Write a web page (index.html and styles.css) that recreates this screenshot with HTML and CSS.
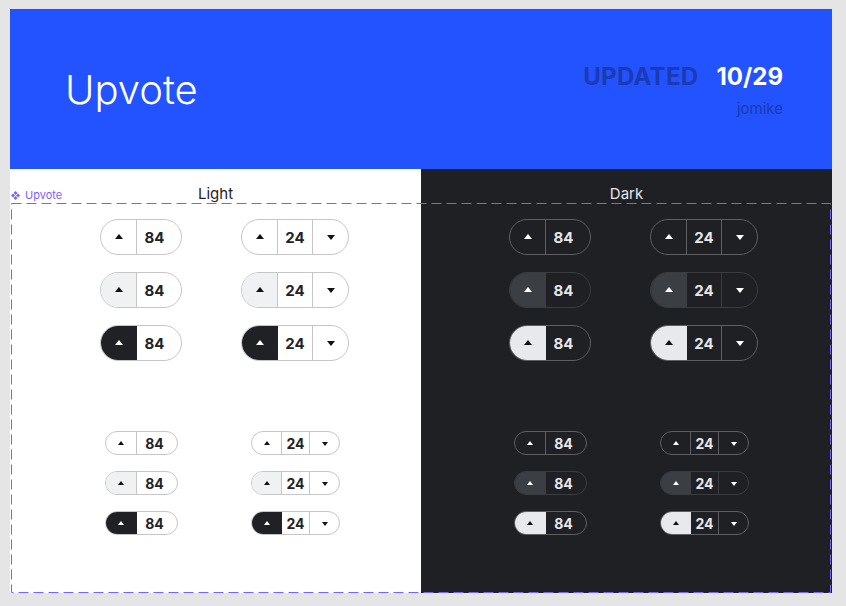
FILE: index.html
```
<!DOCTYPE html>
<html lang="en">
<head>
<meta charset="utf-8">
<title>Upvote</title>
<link rel="stylesheet" href="styles.css">
</head>
<body>
<div class="frame">
  <header class="hero">
    <h1 class="hero-title">Upvote</h1>
    <div class="hero-meta">
      <div class="updated"><span class="updated-label">UPDATED</span><span class="updated-date">10/29</span></div>
      <div class="author">jomike</div>
    </div>
  </header>
  <main class="panels">
    <section class="panel panel-light">
      <h2 class="panel-title">Light</h2>
      <div class="group group-lg">
        <div class="vote vote-lg"><span class="seg up"><i class="tri tri-up"></i></span><span class="seg count">84</span></div>
        <div class="vote vote-lg vote-2"><span class="seg up"><i class="tri tri-up"></i></span><span class="seg count">24</span><span class="seg down"><i class="tri tri-down"></i></span></div>
        <div class="vote vote-lg is-hover"><span class="seg up"><i class="tri tri-up"></i></span><span class="seg count">84</span></div>
        <div class="vote vote-lg vote-2 is-hover"><span class="seg up"><i class="tri tri-up"></i></span><span class="seg count">24</span><span class="seg down"><i class="tri tri-down"></i></span></div>
        <div class="vote vote-lg is-active"><span class="seg up"><i class="tri tri-up"></i></span><span class="seg count">84</span></div>
        <div class="vote vote-lg vote-2 is-active"><span class="seg up"><i class="tri tri-up"></i></span><span class="seg count">24</span><span class="seg down"><i class="tri tri-down"></i></span></div>
      </div>
      <div class="group group-sm">
        <div class="vote vote-sm"><span class="seg up"><i class="tri tri-up"></i></span><span class="seg count">84</span></div>
        <div class="vote vote-sm vote-2"><span class="seg up"><i class="tri tri-up"></i></span><span class="seg count">24</span><span class="seg down"><i class="tri tri-down"></i></span></div>
        <div class="vote vote-sm is-hover"><span class="seg up"><i class="tri tri-up"></i></span><span class="seg count">84</span></div>
        <div class="vote vote-sm vote-2 is-hover"><span class="seg up"><i class="tri tri-up"></i></span><span class="seg count">24</span><span class="seg down"><i class="tri tri-down"></i></span></div>
        <div class="vote vote-sm is-active"><span class="seg up"><i class="tri tri-up"></i></span><span class="seg count">84</span></div>
        <div class="vote vote-sm vote-2 is-active"><span class="seg up"><i class="tri tri-up"></i></span><span class="seg count">24</span><span class="seg down"><i class="tri tri-down"></i></span></div>
      </div>
    </section>
    <section class="panel panel-dark">
      <h2 class="panel-title">Dark</h2>
      <div class="group group-lg">
        <div class="vote vote-lg"><span class="seg up"><i class="tri tri-up"></i></span><span class="seg count">84</span></div>
        <div class="vote vote-lg vote-2"><span class="seg up"><i class="tri tri-up"></i></span><span class="seg count">24</span><span class="seg down"><i class="tri tri-down"></i></span></div>
        <div class="vote vote-lg is-hover"><span class="seg up"><i class="tri tri-up"></i></span><span class="seg count">84</span></div>
        <div class="vote vote-lg vote-2 is-hover"><span class="seg up"><i class="tri tri-up"></i></span><span class="seg count">24</span><span class="seg down"><i class="tri tri-down"></i></span></div>
        <div class="vote vote-lg is-active"><span class="seg up"><i class="tri tri-up"></i></span><span class="seg count">84</span></div>
        <div class="vote vote-lg vote-2 is-active"><span class="seg up"><i class="tri tri-up"></i></span><span class="seg count">24</span><span class="seg down"><i class="tri tri-down"></i></span></div>
      </div>
      <div class="group group-sm">
        <div class="vote vote-sm"><span class="seg up"><i class="tri tri-up"></i></span><span class="seg count">84</span></div>
        <div class="vote vote-sm vote-2"><span class="seg up"><i class="tri tri-up"></i></span><span class="seg count">24</span><span class="seg down"><i class="tri tri-down"></i></span></div>
        <div class="vote vote-sm is-hover"><span class="seg up"><i class="tri tri-up"></i></span><span class="seg count">84</span></div>
        <div class="vote vote-sm vote-2 is-hover"><span class="seg up"><i class="tri tri-up"></i></span><span class="seg count">24</span><span class="seg down"><i class="tri tri-down"></i></span></div>
        <div class="vote vote-sm is-active"><span class="seg up"><i class="tri tri-up"></i></span><span class="seg count">84</span></div>
        <div class="vote vote-sm vote-2 is-active"><span class="seg up"><i class="tri tri-up"></i></span><span class="seg count">24</span><span class="seg down"><i class="tri tri-down"></i></span></div>
      </div>
    </section>
    <svg class="outline" aria-hidden="true"><rect class="outline-rect" x="0.5" y="0.5"/></svg>
    <div class="outline-label">
      <svg class="outline-icon" width="9" height="9" viewBox="0 0 10 10"><path d="M5 0L7.2 2.2L5 4.4L2.8 2.2Z M5 5.6L7.2 7.8L5 10L2.8 7.8Z M2.2 2.8L4.4 5L2.2 7.2L0 5Z M7.8 2.8L10 5L7.8 7.2L5.6 5Z" fill="currentColor"/></svg>
      <span>Upvote</span>
    </div>
  </main>
</div>
</body>
</html>
```

FILE: styles.css
```
* { box-sizing: border-box; }
html, body { margin: 0; padding: 0; }
body {
  background: #e5e5e5;
  font-family: Inter, "Noto Sans", sans-serif;
  padding: 9px 0 0 10px;
}
.frame {
  width: 822px;
}
.hero {
  height: 160px;
  background: #2352ff;
  display: flex;
  justify-content: space-between;
  align-items: flex-start;
  padding: 0 49px 0 55px;
}
.hero-title {
  margin: 57px 0 0;
  font-size: 40px;
  line-height: 48px;
  font-weight: 300;
  color: #ffffff;
  letter-spacing: 0;
}
.hero-meta {
  margin-top: 54px;
  display: flex;
  flex-direction: column;
  align-items: flex-end;
}
.updated {
  display: flex;
  gap: 18px;
  font-size: 24px;
  line-height: 28px;
  font-weight: 700;
}
.updated-label { color: #1a3bb3; letter-spacing: 0.3px; }
.updated-date { color: #ffffff; }
.author {
  margin-top: 9px;
  font-size: 15px;
  line-height: 18px;
  color: #1a3aad;
}
.panels {
  position: relative;
  display: grid;
  grid-template-columns: 411px 411px;
  height: 424px;
}
.panel {
  display: flex;
  flex-direction: column;
  align-items: flex-start;
}
.panel-light { background: #ffffff; color: #222326; }
.panel-dark { background: #1f2024; color: #e6e6e9; }
.panel-title {
  align-self: stretch;
  margin: 0;
  padding-top: 16px;
  height: 50px;
  font-size: 15px;
  line-height: 18px;
  font-weight: 400;
  text-align: center;
}
.group {
  display: grid;
  justify-items: start;
}
.group-lg {
  grid-template-columns: 82px 108px;
  column-gap: 59px;
  row-gap: 17px;
  margin-left: 90px;
}
.group-sm {
  grid-template-columns: 73px 89px;
  column-gap: 73px;
  row-gap: 16px;
  margin-left: 95px;
  margin-top: 70px;
}
.panel-dark .group-lg { margin-left: 88px; }
.panel-dark .group-sm { margin-left: 93px; }

.vote {
  display: inline-flex;
  align-items: stretch;
  border: 1px solid #c6c6c8;
  border-radius: 999px;
  overflow: hidden;
}
.vote-lg { height: 36px; }
.vote-sm { height: 24px; }
.seg {
  display: flex;
  align-items: center;
  justify-content: center;
}
.count, .down { border-left: 1px solid #c6c6c8; }
.count { font-weight: 700; color: inherit; }
.vote-lg .count { font-size: 15px; }
.vote-sm .count { font-size: 14px; }
.vote-lg .up { width: 35px; }
.vote-lg .count { width: 45px; padding-right: 9px; }
.vote-lg.vote-2 .count { width: 35px; padding-right: 0; }
.vote-lg .down { width: 36px; }
.vote-sm .up { width: 30px; }
.vote-sm .count { width: 41px; padding-right: 5px; }
.vote-sm.vote-2 .up { width: 29px; }
.vote-sm.vote-2 .count { width: 28px; padding-right: 0; }
.vote-sm.vote-2 .down { width: 30px; }

.tri { display: block; width: 0; height: 0; }
.vote-lg .tri-up { border-left: 4.5px solid transparent; border-right: 4.5px solid transparent; border-bottom: 5px solid currentColor; margin-top: -2px; }
.vote-lg .tri-down { border-left: 4.5px solid transparent; border-right: 4.5px solid transparent; border-top: 5px solid currentColor; margin-top: 1px; }
.vote-sm .tri-up { border-left: 3px solid transparent; border-right: 3px solid transparent; border-bottom: 4px solid currentColor; margin-top: -1px; }
.vote-sm .tri-down { border-left: 3px solid transparent; border-right: 3px solid transparent; border-top: 4px solid currentColor; margin-top: 1px; }

.panel-light .up, .panel-light .down { color: #111214; }
.panel-light .is-hover .up { background: #f0f1f3; }
.panel-light .is-active .up { background: #202124; color: #ffffff; }
.panel-light .is-active .count { border-left-color: #202124; }

.panel-dark .vote { border-color: #5d5f63; }
.panel-dark .count, .panel-dark .down { border-left-color: #5d5f63; }
.panel-dark .up, .panel-dark .down { color: #ffffff; }
.panel-dark .is-hover { border-color: #3a3c40; }
.panel-dark .is-hover .count, .panel-dark .is-hover .down { border-left-color: #3a3c40; }
.panel-dark .is-hover .up { background: #3b3e42; }
.panel-dark .is-hover .count { border-left-color: #3b3e42; }
.panel-dark .is-active .up { background: #e8e9ed; color: #111214; }
.panel-dark .is-active .count { border-left-color: #e8e9ed; }

.outline {
  position: absolute;
  left: 1px;
  top: 34px;
  width: 820px;
  height: 390px;
  pointer-events: none;
  overflow: visible;
}
.outline-rect {
  width: 819px;
  height: 389px;
  fill: none;
  stroke: #7b61ff;
  stroke-width: 1;
  stroke-dasharray: 10 5;
}
.outline-label {
  position: absolute;
  left: 1px;
  top: 19px;
  display: flex;
  align-items: center;
  gap: 5px;
  font-size: 11px;
  line-height: 14px;
  color: #7b61ff;
}
.outline-icon { display: block; }
```
